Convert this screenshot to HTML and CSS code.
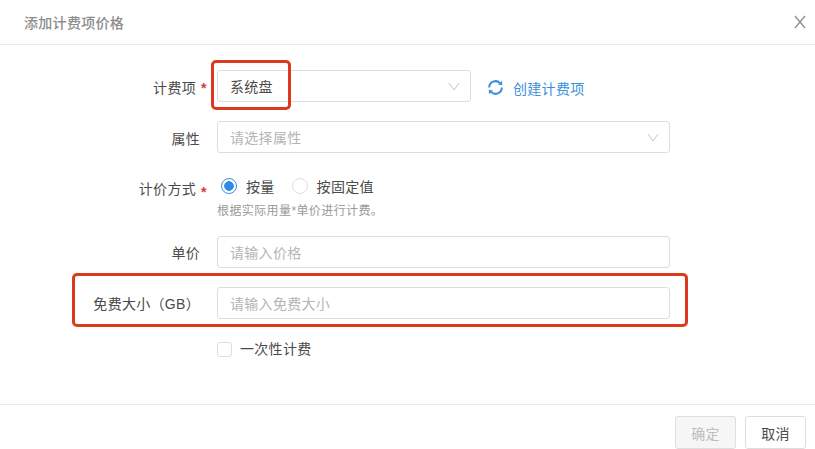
FILE: index.html
```html
<!DOCTYPE html>
<html lang="zh-CN">
<head>
  <meta charset="UTF-8"/>
  <meta name="viewport" content="width=device-width, initial-scale=1.0"/>
  <title>添加计费项价格</title>
  <link rel="stylesheet" href="styles.css">
</head>
<body>

  <div class="dialog">
    <header class="dialog-header">
      <h2>添加计费项价格</h2>
      <svg class="close-icon" width="12" height="14" viewBox="0 0 12 14">
        <path d="M1 1L11 13M11 1L1 13"/>
      </svg>
    </header>

    <form class="dialog-body">
      <div class="row">
        <label class="row-label required">计费项</label>
        <div class="select select-short">
          <span>系统盘</span>
          <svg class="chevron" width="12" height="9" viewBox="0 0 12 9"><path d="M1 1L6 8L11 1"/></svg>
        </div>
        <a class="create-link" href="#">
          <svg class="refresh-icon" width="17" height="17" viewBox="0 0 17 17">
            <path d="M2.2 8.5A6.3 6.3 0 0 1 13 4.1"/>
            <path d="M14.8 8.5A6.3 6.3 0 0 1 4 12.9"/>
            <path class="arrow" d="M15 1.8L15.2 6.2L11 5.6Z"/>
            <path class="arrow" d="M2 15.2L1.8 10.8L6 11.4Z"/>
          </svg>
          创建计费项
        </a>
      </div>

      <div class="row">
        <label class="row-label">属性</label>
        <div class="select select-full placeholder">
          <span>请选择属性</span>
          <svg class="chevron" width="12" height="9" viewBox="0 0 12 9"><path d="M1 1L6 8L11 1"/></svg>
        </div>
      </div>

      <div class="row row-radio">
        <label class="row-label required">计价方式</label>
        <div class="radio-block">
          <div class="radio-group">
            <span class="radio radio-on"></span><span class="radio-text">按量</span>
            <span class="radio"></span><span class="radio-text">按固定值</span>
          </div>
          <p class="help">根据实际用量*单价进行计费。</p>
        </div>
      </div>

      <div class="row row-input">
        <label class="row-label">单价</label>
        <div class="select select-full placeholder"><span>请输入价格</span></div>
      </div>

      <div class="row row-input">
        <label class="row-label">免费大小（GB）</label>
        <div class="select select-full placeholder"><span>请输入免费大小</span></div>
      </div>

      <div class="check-row">
        <span class="checkbox"></span>
        <span class="check-text">一次性计费</span>
      </div>
    </form>

    <footer class="dialog-footer">
      <button type="button" class="btn" disabled>确定</button>
      <button type="button" class="btn">取消</button>
    </footer>
  </div>

  <!-- red annotation boxes drawn over the screenshot -->
  <div class="mark mark-item"></div>
  <div class="mark mark-free"></div>

</body>
</html>
```

FILE: styles.css
```css
* {
  box-sizing: border-box;
}

body {
  margin: 0;
  background-color: #fff;
  color: #4a4a4a;
  font-family: "Liberation Sans", "Noto Sans CJK SC", sans-serif;
  font-size: 14px;
  overflow: hidden;
}

.dialog {
  position: relative;
  width: 815px;
  height: 449px;
}

.dialog-header {
  height: 45px;
  padding: 0 9px 0 24px;
  display: flex;
  justify-content: space-between;
  align-items: center;
  border-bottom: 1px solid #ebebeb;
}

.dialog-header h2 {
  margin: 0;
  font-size: 14px;
  font-weight: 500;
  letter-spacing: 0.3px;
  color: #8c8c8c;
}

.close-icon path {
  fill: none;
  stroke: #8a8a8a;
  stroke-width: 1.2;
}

.dialog-body {
  height: 359px;
  padding-top: 25px;
}

.row {
  display: flex;
  align-items: center;
  height: 32px;
  margin-bottom: 19px;
}

.row-label {
  width: 200px;
  padding-top: 2px;
  text-align: right;
  margin-right: 17px;
  letter-spacing: 0.3px;
  position: relative;
}

.row-input .row-label {
  padding-top: 0;
}

.required {
  padding-right: 4px;
}

.required::after {
  content: "*";
  position: absolute;
  left: 201px;
  top: 5px;
  color: #d9363e;
  font-weight: bold;
}

.select {
  height: 32px;
  padding: 0 10px 0 12px;
  display: flex;
  justify-content: space-between;
  align-items: center;
  border: 1px solid #dedede;
  border-radius: 3px;
  letter-spacing: 0.3px;
}

.select-short {
  width: 254px;
}

.select-full {
  width: 453px;
}

.placeholder {
  color: #b5b5b5;
}

.chevron path {
  fill: none;
  stroke: #c4c4c4;
  stroke-width: 1;
}

.create-link {
  margin-left: 16px;
  padding-top: 3px;
  display: flex;
  align-items: center;
  gap: 9px;
  color: #3d8fdc;
  text-decoration: none;
  letter-spacing: 0.3px;
}

.refresh-icon path {
  fill: none;
  stroke: #3d8fdc;
  stroke-width: 2;
}

.refresh-icon .arrow {
  fill: #3d8fdc;
  stroke: none;
}

.row-radio {
  height: auto;
  align-items: flex-start;
  margin-top: 23px;
  margin-bottom: 15px;
}

.row-radio .row-label {
  line-height: 22px;
}

.radio-block {
  display: flex;
  flex-direction: column;
}

.radio-group {
  display: flex;
  align-items: center;
  height: 20px;
  padding-left: 4px;
}

.radio {
  width: 16px;
  height: 16px;
  border: 1px solid #dedede;
  border-radius: 50%;
  margin-right: 9px;
}

.radio-on {
  border-color: #3d8fdc;
  background: radial-gradient(circle, #2f8ae8 0 4.5px, #fff 5px);
}

.radio-text {
  margin-right: 17px;
  letter-spacing: 0.3px;
}

.help {
  margin: 5px 0 0;
  font-size: 12px;
  line-height: 20px;
  letter-spacing: 0.4px;
  color: #9a9a9a;
}

.check-row {
  display: flex;
  align-items: center;
  gap: 8px;
  height: 22px;
  margin-left: 217px;
  letter-spacing: 0.3px;
}

.check-text {
  padding-bottom: 2px;
}

.checkbox {
  width: 15px;
  height: 15px;
  border: 1px solid #dedede;
  border-radius: 3px;
}

.dialog-footer {
  height: 45px;
  padding: 11px 9px 0 0;
  display: flex;
  justify-content: flex-end;
  gap: 9px;
  border-top: 1px solid #ebebeb;
}

.btn {
  width: 61px;
  height: 33px;
  padding: 0;
  background-color: #fff;
  border: 1px solid #dedede;
  border-radius: 3px;
  color: #4a4a4a;
  font-family: inherit;
  font-size: 14px;
  letter-spacing: 0.3px;
}

.btn:disabled {
  background-color: #f6f6f6;
  color: #bdbdbd;
}

.mark {
  position: absolute;
  border: 3px solid #dc3a1e;
  border-radius: 5px;
}

.mark-item {
  left: 211px;
  top: 60px;
  width: 80px;
  height: 50px;
}

.mark-free {
  left: 72px;
  top: 273px;
  width: 616px;
  height: 54px;
}
```
